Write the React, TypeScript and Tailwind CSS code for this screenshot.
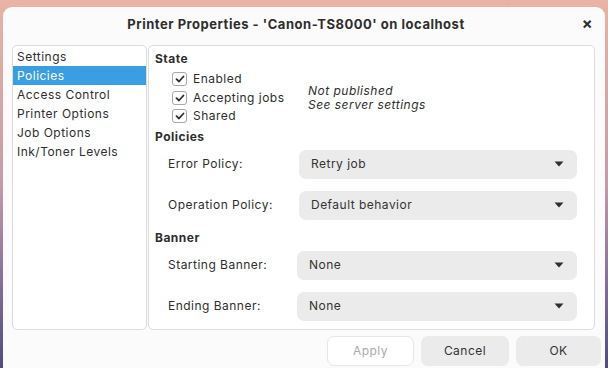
import React from 'react';

const font = { fontFamily: 'Inter, "Noto Sans", sans-serif' };

const Check = () => (
  <div className="w-[15px] h-[14px] rounded-[3px] border border-[#a8a8a8] bg-white flex items-center justify-center">
    <svg width="10" height="8" viewBox="0 0 10 8">
      <path d="M1.5 4.2 L4 6.5 L8.5 1.5" fill="none" stroke="#2e2e2e" strokeWidth="1.8" strokeLinecap="round" strokeLinejoin="round" />
    </svg>
  </div>
);

const Combo = ({ value, wide }: { value: string; wide?: boolean }) => (
  <div className={`${wide ? 'w-[280px]' : 'w-[278px]'} h-[29px] rounded-[7px] bg-[#ebebeb] flex items-center justify-between pl-[12px] pr-[13px]`}>
    <span className="text-[12px] text-[#333]">{value}</span>
    <svg width="10" height="6" viewBox="0 0 10 6">
      <path d="M0.5 0.5 L9.5 0.5 L5 5.5 Z" fill="#2e2e2e" />
    </svg>
  </div>
);

export default function App() {
  const pages = ['Settings', 'Policies', 'Access Control', 'Printer Options', 'Job Options', 'Ink/Toner Levels'];
  return (
    <div className="w-[608px] h-[368px] overflow-hidden bg-gradient-to-b from-[#e9b3a6] via-[#c59aa8] to-[#4f4a86] pt-[7px] px-[3px] tracking-[0.03em]" style={font}>
      <div className="bg-[#fbfbfb] rounded-t-[9px] h-full flex flex-col">
        {/* Title bar */}
        <div className="h-[35px] relative flex items-center justify-center pr-[16px]">
          <span className="text-[13px] font-bold text-[#2e2e2e] pt-[1px] tracking-[0.04em]">Printer Properties - 'Canon-TS8000' on localhost</span>
          <span className="absolute right-[12px] top-[4px] text-[16px] font-bold text-[#2e2e2e]">×</span>
        </div>

        <div className="flex pt-[3px] pl-[9px] pr-[10px] gap-[1px]">
          {/* Sidebar */}
          <div className="w-[135px] h-[285px] bg-white border border-[#dcdcdc] rounded-[5px] pt-[1px] text-[12px] text-[#2e2e2e]">
            {pages.map((p) => (
              <div
                key={p}
                className={`h-[19px] flex items-center pl-[4px] ${p === 'Policies' ? 'bg-[#3a9ee3] text-white' : ''}`}
              >
                {p}
              </div>
            ))}
          </div>

          {/* Content panel */}
          <div className="flex-1 h-[285px] bg-white border border-[#dcdcdc] rounded-[5px] pl-[6px] text-[12px] text-[#2e2e2e]">
            <div className="h-[14px] mt-[6px] leading-[14px] font-bold">State</div>
            <div className="flex mt-[4px]">
              <div className="pl-[17px] w-[153px]">
                {['Enabled', 'Accepting jobs', 'Shared'].map((l) => (
                  <div key={l} className="h-[18.5px] flex items-center gap-[6px]">
                    <Check />
                    <span>{l}</span>
                  </div>
                ))}
              </div>
              <div className="italic text-[12px] leading-[14px] pt-[14px]">
                <div>Not published</div>
                <div>See server settings</div>
              </div>
            </div>
            <div className="h-[14px] mt-[4px] leading-[14px] font-bold">Policies</div>
            <div className="flex items-center mt-[6px]">
              <span className="w-[144px] pl-[13px]">Error Policy:</span>
              <Combo value="Retry job" />
            </div>
            <div className="flex items-center mt-[12px]">
              <span className="w-[144px] pl-[13px]">Operation Policy:</span>
              <Combo value="Default behavior" />
            </div>
            <div className="h-[14px] mt-[11px] leading-[14px] font-bold">Banner</div>
            <div className="flex items-center mt-[6px]">
              <span className="w-[142px] pl-[13px]">Starting Banner:</span>
              <Combo value="None" wide />
            </div>
            <div className="flex items-center mt-[12px]">
              <span className="w-[142px] pl-[13px]">Ending Banner:</span>
              <Combo value="None" wide />
            </div>
          </div>
        </div>

        {/* Buttons */}
        <div className="flex justify-end gap-[7px] pr-[4px] mt-[6px] text-[12px]">
          <div className="w-[87px] h-[30px] rounded-[7px] border border-[#e6e6e6] bg-white flex items-center justify-center text-[#aaaaaa]">Apply</div>
          <div className="w-[88px] h-[30px] rounded-[7px] bg-[#ebebeb] flex items-center justify-center text-[#333]">Cancel</div>
          <div className="w-[85px] h-[30px] rounded-[7px] bg-[#ebebeb] flex items-center justify-center text-[#333]">OK</div>
        </div>
      </div>
    </div>
  );
}
